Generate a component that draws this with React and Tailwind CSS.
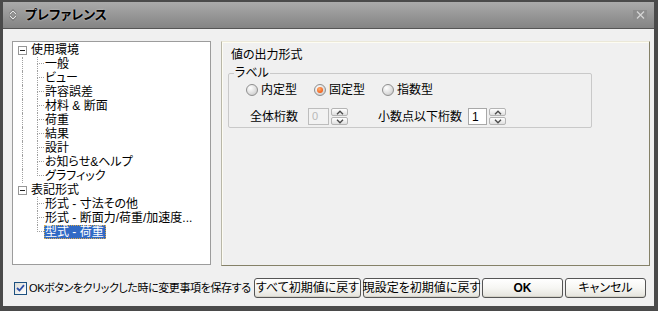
import React from "react";

const FONT =
  "font-['Liberation_Sans','Noto_Sans_CJK_JP',sans-serif] [font-feature-settings:'palt']";

const groups = [
  {
    label: "使用環境",
    items: ["一般", "ビュー", "許容誤差", "材料 & 断面", "荷重", "結果", "設計", "お知らせ&ヘルプ", "グラフィック"],
  },
  {
    label: "表記形式",
    items: ["形式 - 寸法その他", "形式 - 断面力/荷重/加速度...", "型式 - 荷重"],
  },
];

const SELECTED = "型式 - 荷重";

function ExpandBox() {
  return (
    <div className="flex h-[9px] w-[9px] items-center justify-center border border-[#969696] bg-white">
      <div className="h-px w-[5px] bg-[#222]" />
    </div>
  );
}

function TreeRow({ label, last, rootLine }) {
  const selected = label === SELECTED;
  return (
    <div className="flex h-[14px] items-stretch">
      <div className="w-[24px] shrink-0">
        {rootLine && <div className="ml-[9px] h-full border-l border-dotted border-[#a0a0a0]" />}
      </div>
      <div className="flex w-[7px] shrink-0 flex-col">
        <div className="h-[7px] border-b border-l border-dotted border-[#a0a0a0]" />
        <div className={last ? "h-[7px]" : "h-[7px] border-l border-dotted border-[#a0a0a0]"} />
      </div>
      <div
        className={
          selected
            ? "border border-dotted border-[#d8a848] bg-[#316ac5] pr-[1px] leading-[12px] text-white"
            : "border border-transparent pr-[1px] leading-[12px] text-black"
        }
      >
        {label}
      </div>
    </div>
  );
}

function Tree() {
  return (
    <div className="h-[224px] w-[199px] shrink-0 border border-[#9c9c9c] bg-white pt-px text-[12px]">
      {groups.map((g, gi) => (
        <div key={g.label}>
          <div className="flex h-[14px] items-center">
            <div className="ml-[5px] w-[13px] shrink-0">
              <ExpandBox />
            </div>
            <span className="leading-[14px]">{g.label}</span>
          </div>
          {g.items.map((it, i) => (
            <TreeRow key={it} label={it} last={i === g.items.length - 1} rootLine={gi === 0} />
          ))}
        </div>
      ))}
    </div>
  );
}

function Radio({ label, checked }) {
  return (
    <div className="flex items-center gap-[3px]">
      <div className="flex h-[12px] w-[12px] items-center justify-center rounded-full border border-[#8f8f8f] bg-[radial-gradient(circle_at_35%_30%,#ffffff,#dcdcdc_60%,#bdbdbd)]">
        {checked && (
          <div className="h-[6px] w-[6px] rounded-full bg-[radial-gradient(circle_at_40%_35%,#ffb070,#f0601c_70%)]" />
        )}
      </div>
      <span className="leading-[14px]">{label}</span>
    </div>
  );
}

function Arrow({ up }) {
  return (
    <svg width="8" height="5" viewBox="0 0 8 5">
      <path
        d={up ? "M1 4.2 L4 1.2 L7 4.2" : "M1 0.8 L4 3.8 L7 0.8"}
        fill="none"
        stroke="#4a4a4a"
        strokeWidth="1.3"
      />
    </svg>
  );
}

function Spinner({ value, disabled, w }) {
  return (
    <div className="flex items-center gap-[2px]">
      <div
        className={
          disabled
            ? "flex h-[17px] items-center border border-[#bdbdbd] bg-[#f2f2f2] pl-[3px] text-[11px] text-[#b8b8b8] " + w
            : "flex h-[17px] items-center border border-[#a8a8a8] bg-white pl-[3px] text-[12px] text-black " + w
        }
      >
        {value}
      </div>
      <div className="flex h-[17px] w-[17px] flex-col gap-px">
        <div className="flex flex-1 items-center justify-center rounded-[2px] border border-[#b4b4b4] bg-linear-to-b from-white to-[#e0e0e0]">
          <Arrow up />
        </div>
        <div className="flex flex-1 items-center justify-center rounded-[2px] border border-[#b4b4b4] bg-linear-to-b from-white to-[#e0e0e0]">
          <Arrow />
        </div>
      </div>
    </div>
  );
}

function Panel() {
  return (
    <div className="h-[225px] flex-1 border border-b-[#858168] border-l-[#b9b7a8] border-r-[#858168] border-t-[#ebe8d8] bg-[#f0f0f0] px-[6px] pt-[6px] text-[12px] shadow-[inset_1px_1px_0_#fdfcf2]">
      <div className="ml-[3px] leading-[14px]">値の出力形式</div>
      <fieldset className="mt-[4px] w-[364px] rounded-[2px] border border-[#c9c9c9] pb-[2px] pl-[5px]">
        <legend className="px-[1px] leading-[14px]">ラベル</legend>
        <div className="ml-[12px] mt-[3px] flex h-[14px] items-center gap-[17px]">
          <Radio label="内定型" />
          <Radio label="固定型" checked />
          <Radio label="指数型" />
        </div>
        <div className="ml-[16px] mt-[11px] flex h-[17px] items-center">
          <span className="leading-[14px]">全体桁数</span>
          <div className="ml-[10px]">
            <Spinner value="0" disabled w="w-[21px]" />
          </div>
          <span className="ml-[30px] leading-[14px]">小数点以下桁数</span>
          <div className="ml-[6px]">
            <Spinner value="1" w="w-[19px]" />
          </div>
        </div>
      </fieldset>
    </div>
  );
}

function Button({ children, w, bold }) {
  return (
    <button
      className={
        "flex h-[20px] shrink-0 items-center justify-center whitespace-nowrap rounded-[3px] border border-[#555] bg-linear-to-b from-white via-[#f6f6f3] to-[#e4e3dc] text-[12px] leading-[14px] text-black shadow-[inset_0_-1px_0_#d4d2c8] " +
        w +
        (bold ? " font-bold" : "")
      }
    >
      {children}
    </button>
  );
}

export default function App() {
  return (
    <div className={"h-[311px] w-[658px] bg-[#4a4a4a] pb-[5px] pl-[3px] pr-[4px] pt-[2px] " + FONT}>
      <div className="flex h-[26px] items-center bg-linear-to-b from-[#aaaaaa] to-[#848484] pl-[5px] pr-[7px]">
        <svg width="10" height="12" viewBox="0 0 10 12">
          <path d="M2 5 L5 2 L8 5" fill="none" stroke="#555" strokeWidth="2.4" />
          <path d="M2 7 L5 10 L8 7" fill="none" stroke="#555" strokeWidth="2.4" />
          <path d="M2 5 L5 2 L8 5" fill="none" stroke="#e6e6e6" strokeWidth="1.2" />
          <path d="M2 7 L5 10 L8 7" fill="none" stroke="#e6e6e6" strokeWidth="1.2" />
        </svg>
        <span className="ml-[7px] text-[13px] font-bold leading-[14px] text-black [text-shadow:0_0_2px_#d0d0d0]">
          プレファレンス
        </span>
        <div className="ml-auto flex h-[11px] w-[14px] items-center justify-center bg-[#8e8e8e]">
          <svg width="9" height="8" viewBox="0 0 9 8">
            <path d="M1 0.5 L8 7.5 M8 0.5 L1 7.5" stroke="#d4d4d4" strokeWidth="1.3" />
          </svg>
        </div>
      </div>
      <div className="h-px bg-[#555]" />
      <div className="flex h-[277px] flex-col bg-[#f0f0f0] pl-[9px] pr-[4px] pt-[12px]">
        <div className="flex items-start gap-[10px]">
          <Tree />
          <Panel />
        </div>
        <div className="mr-[4px] mt-[12px] flex h-[20px] items-center">
          <div className="ml-[2px] flex h-[13px] w-[13px] shrink-0 items-center justify-center border border-[#1c5180] bg-linear-to-br from-[#dcdcd6] to-white">
            <svg width="9" height="8" viewBox="0 0 9 8">
              <path d="M1 4 L3.5 6.5 L8 1.2" fill="none" stroke="#2c4fa8" strokeWidth="1.8" />
            </svg>
          </div>
          <span className="ml-[2px] min-w-0 whitespace-nowrap text-[11px] leading-[14px] tracking-[-0.4px]">
            OKボタンをクリックした時に変更事項を保存する
          </span>
          <div className="ml-auto flex shrink-0 gap-[2px]">
            <Button w="w-[107px]">すべて初期値に戻す</Button>
            <Button w="w-[117px]">現設定を初期値に戻す</Button>
            <Button w="w-[81px]" bold>
              OK
            </Button>
            <Button w="w-[81px]">キャンセル</Button>
          </div>
        </div>
      </div>
    </div>
  );
}
